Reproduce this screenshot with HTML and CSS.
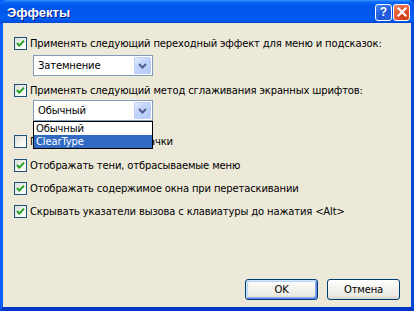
FILE: index.html
```html
<!DOCTYPE html>
<html lang="ru">
<head>
    <meta charset="UTF-8">
    <title>Эффекты</title>
    <link rel="stylesheet" href="styles.css">
</head>
<body>
    <div class="window">
        <div class="titlebar">
            <span class="title">Эффекты</span>
            <div class="caption-buttons">
                <span class="cap-btn help">?</span>
                <span class="cap-btn close">
                    <svg width="10" height="10" viewBox="0 0 10 10">
                        <path d="M1.5 1.5 L8.5 8.5 M8.5 1.5 L1.5 8.5" stroke="#fff" stroke-width="2.2" stroke-linecap="square"/>
                    </svg>
                </span>
            </div>
        </div>

        <div class="client">
            <div class="check-row row-1">
                <span class="box checked"><svg width="11" height="11" viewBox="0 0 11 11"><path d="M2 5 L4.3 7.6 L9 2.6" fill="none" stroke="#21a121" stroke-width="2"/></svg></span>
                <span class="label">Применять следующий переходный эффект для меню и подсказок:</span>
            </div>
            <div class="combo combo-1">
                <span class="value">Затемнение</span>
                <span class="arrow"><svg width="9" height="6" viewBox="0 0 9 6"><path d="M1 1 L4.5 4.5 L8 1" fill="none" stroke="#4d6185" stroke-width="2"/></svg></span>
            </div>

            <div class="check-row row-2">
                <span class="box checked"><svg width="11" height="11" viewBox="0 0 11 11"><path d="M2 5 L4.3 7.6 L9 2.6" fill="none" stroke="#21a121" stroke-width="2"/></svg></span>
                <span class="label">Применять следующий метод сглаживания экранных шрифтов:</span>
            </div>
            <div class="combo-wrap">
                <div class="combo combo-2">
                    <span class="value">Обычный</span>
                    <span class="arrow"><svg width="9" height="6" viewBox="0 0 9 6"><path d="M1 1 L4.5 4.5 L8 1" fill="none" stroke="#4d6185" stroke-width="2"/></svg></span>
                </div>
                <ul class="dropdown">
                    <li>Обычный</li>
                    <li class="selected">ClearType</li>
                </ul>
            </div>

            <div class="check-row row-3">
                <span class="box"></span>
                <span class="label">Применять крупные значки</span>
            </div>
            <div class="check-row row-4">
                <span class="box checked"><svg width="11" height="11" viewBox="0 0 11 11"><path d="M2 5 L4.3 7.6 L9 2.6" fill="none" stroke="#21a121" stroke-width="2"/></svg></span>
                <span class="label">Отображать тени, отбрасываемые меню</span>
            </div>
            <div class="check-row row-5">
                <span class="box checked"><svg width="11" height="11" viewBox="0 0 11 11"><path d="M2 5 L4.3 7.6 L9 2.6" fill="none" stroke="#21a121" stroke-width="2"/></svg></span>
                <span class="label">Отображать содержимое окна при перетаскивании</span>
            </div>
            <div class="check-row row-6">
                <span class="box checked"><svg width="11" height="11" viewBox="0 0 11 11"><path d="M2 5 L4.3 7.6 L9 2.6" fill="none" stroke="#21a121" stroke-width="2"/></svg></span>
                <span class="label">Скрывать указатели вызова с клавиатуры до нажатия &lt;Alt&gt;</span>
            </div>

            <div class="buttons">
                <button class="btn default">OK</button>
                <button class="btn">Отмена</button>
            </div>
        </div>
    </div>
</body>
</html>
```

FILE: styles.css
```css
body {
    margin: 0;
    padding: 0;
    background: #ece9d8;
    font-family: "DejaVu Sans", Tahoma, sans-serif;
    font-size: 10px;
    letter-spacing: -0.15px;
    color: #000;
}

.window {
    width: 414px;
    height: 311px;
    box-sizing: border-box;
    display: flex;
    flex-direction: column;
    background: #0054e3;
    border-left: 3px solid #0a5ef5;
    border-right: 3px solid #0047d6;
    border-bottom: 4px solid #0036c8;
}

.titlebar {
    height: 23px;
    margin: 0 -3px;
    padding: 0 4px 0 7px;
    display: flex;
    align-items: center;
    justify-content: space-between;
    background: linear-gradient(to bottom, #3d95ff 0, #0a6af8 2px, #0058ee 5px, #0055ea 55%, #0060f6 82%, #0047d6 100%);
    border-radius: 6px 6px 0 0;
}

.title {
    font-family: "Liberation Sans", Arial, sans-serif;
    font-weight: bold;
    font-size: 13px;
    letter-spacing: 0;
    color: #fff;
    text-shadow: 1px 1px 0 #0a1883;
    padding-top: 1px;
}

.caption-buttons {
    display: flex;
    gap: 1px;
    padding-top: 1px;
}

.cap-btn {
    width: 15px;
    height: 15px;
    border: 1px solid #fff;
    border-radius: 3px;
    display: flex;
    align-items: center;
    justify-content: center;
}

.help {
    background: radial-gradient(circle at 70% 80%, #2a63e0 0, #1d56d8 40%, #4a88f0 100%);
    color: #fff;
    font-family: "Liberation Sans", Arial, sans-serif;
    font-weight: bold;
    font-size: 12px;
    letter-spacing: 0;
    line-height: 15px;
}

.close {
    background: radial-gradient(circle at 70% 80%, #c93a10 0, #e2522a 45%, #f08a6a 100%);
}

.client {
    flex: 1;
    background: #ece9d8;
    display: flex;
    flex-direction: column;
    align-items: flex-start;
    padding: 14px 11px 7px 11px;
}

.check-row {
    height: 13px;
    display: flex;
    align-items: center;
    white-space: nowrap;
}

.box {
    width: 11px;
    height: 11px;
    border: 1px solid #1c5180;
    background: linear-gradient(135deg, #dcdcd7 0, #f4f4f0 60%, #ffffff 100%);
    margin-right: 3px;
    flex-shrink: 0;
    display: flex;
}

.label {
    line-height: 13px;
}

.row-2 { margin-top: 8px; }
.row-3 { margin-top: 14px; }
.row-4 { margin-top: 11px; }
.row-5 { margin-top: 10px; }
.row-6 { margin-top: 10px; }

.combo {
    width: 120px;
    height: 21px;
    box-sizing: border-box;
    border: 1px solid #7f9db9;
    background: #fff;
    display: flex;
    align-items: center;
    justify-content: space-between;
    padding: 1px;
}

.combo-1 {
    margin: 5px 0 0 19px;
}

.combo-wrap {
    position: relative;
    margin: 3px 0 0 19px;
}

.value {
    padding-left: 3px;
}

.arrow {
    width: 17px;
    height: 17px;
    border: 1px solid #bad1fc;
    border-radius: 1px;
    background: linear-gradient(135deg, #e4ecfd 0, #c3d3fd 40%, #b6c9f7 100%);
    display: flex;
    align-items: center;
    justify-content: center;
    box-sizing: border-box;
}

.dropdown {
    position: absolute;
    top: 100%;
    left: 0;
    width: 120px;
    box-sizing: border-box;
    margin: 0;
    padding: 0;
    list-style: none;
    background: #fff;
    border: 1px solid #000;
    z-index: 2;
}

.dropdown li {
    height: 13px;
    line-height: 13px;
    padding-left: 2px;
}

.dropdown .selected {
    background: #316ac5;
    color: #fff;
}

.buttons {
    margin-top: auto;
    align-self: flex-end;
    display: flex;
    gap: 9px;
}

.btn {
    width: 73px;
    height: 21px;
    border: 1px solid #003c74;
    border-radius: 3px;
    background: linear-gradient(to bottom, #ffffff 0, #f4f3ee 40%, #ecebe6 80%, #d6d0c5 100%);
    font-family: "DejaVu Sans", Tahoma, sans-serif;
    font-size: 10px;
    letter-spacing: -0.15px;
    color: #000;
    padding: 0;
}

.btn.default {
    box-shadow: inset 1px 1px 0 #cee7ff, inset -1px -1px 0 #6982ee, inset 2px 2px 0 #bcd4f6, inset -2px -2px 0 #89ade4;
}
```
